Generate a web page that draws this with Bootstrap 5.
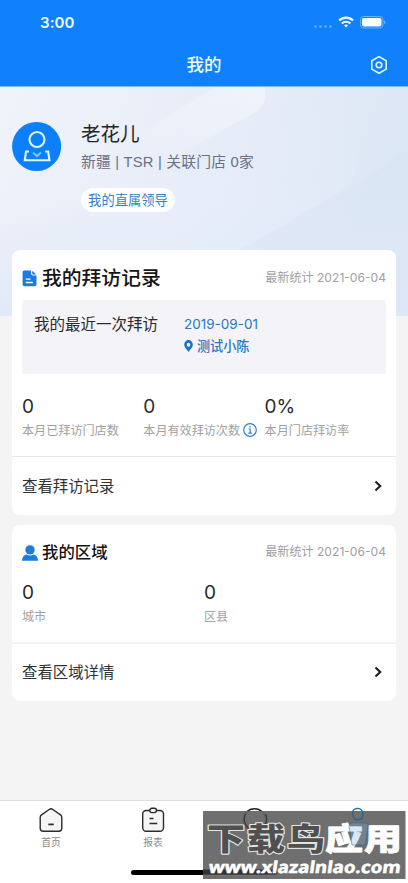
<!DOCTYPE html>
<html lang="zh-CN">
<head>
<meta charset="utf-8">
<meta name="viewport" content="width=device-width, initial-scale=1">
<title>我的</title>
<link href="https://cdn.jsdelivr.net/npm/bootstrap@5.3.0/dist/css/bootstrap.min.css" rel="stylesheet">
<style>
body{font-family:Inter,"Noto Sans CJK SC",sans-serif;background:#f4f4f4;color:#2b2b2d;height:883px;overflow:hidden}
svg{display:block;flex:none}
.app{width:408px;height:883px}
.topbar{height:87px;background:#1080fd;color:#edfdff;border-bottom:1px solid #6fc1ff}
.status{height:44px;padding:2px 22px 0 40px}
.clock{font-size:15px;font-weight:600;letter-spacing:.1px}
.titlebar{height:42px}
.page-title{font-size:17.5px;font-weight:500;line-height:42px}
.gear{right:20px;top:11px}
.hero{height:229px;background:#e5ecf8}
.hero-art{left:0;top:0}
.profile{padding:33px 12px 0;gap:20px}
.avatar{margin-top:2px}
.user-name{font-size:19.5px;line-height:28px;color:#252629}
.user-meta{font-size:14.8px;line-height:22px;margin-top:3px;color:#6d6f86;white-space:nowrap;font-family:"Liberation Sans","Noto Sans CJK SC",sans-serif;letter-spacing:.18px}
.leader{font-size:13.3px;line-height:24px;height:24px;width:94px;margin-top:15px;color:#347fc3;background:#fff}
.cards{margin-top:-66px;padding:0 12px;gap:10px}
.panel{border-radius:8px;background:#fff}
.panel-a{height:265px}
.panel-b{height:176px}
.px{padding-left:10px;padding-right:10px}
.head-a{height:50px;padding-top:7px}
.head-b{height:54px;padding-top:1px}
.t-a{font-size:19.8px;font-weight:500;color:#151515;margin-left:5px}
.t-b{font-size:16.4px;font-weight:500;color:#151515;margin-left:4px}
.stamp{font-size:12.1px;color:#a0a0a2;white-space:nowrap}
.recent{height:74px;margin:0 10px;background:#f3f3f8;border-radius:3px;padding:13px 12px 0}
.recent-label{width:150px;font-size:15.5px;line-height:24px}
.recent-info{font-size:13.1px;line-height:22px;color:#2878c2}
.visit-date{font-size:13.5px}
.stats-a{height:82px;padding-top:20px}
.stats-b{height:63px;padding-top:1px}
.third{width:121.3px}
.half{width:182px}
.num{font-size:19px;line-height:26px;font-weight:400}
.cap{font-size:12.1px;line-height:20px;color:#a1a1a3;white-space:nowrap;margin-top:1px}
.info-dot{margin:-2px 0 0 3px}
.link-row{font-size:15.4px;color:#333;padding-right:14px}
.link-row svg{margin-top:-1px}
.link-a{height:59px;border-top:1px solid #e6e6e6;padding-top:1px}
.link-b{height:59px;border-top:2px solid #f2f2f2}
.tabs{height:83px;background:#fff;border-top:1px solid #dedede}
.tab{width:102px;padding-top:6px;font-size:9.8px;line-height:16px;color:#8b8b8b}
.tab svg{margin-bottom:2px}
.home-bar{left:131px;top:869.5px;width:146px;height:5px;background:#000;border-radius:3px}
.brand{left:202.5px;top:811px}
</style>
<script src="https://cdn.jsdelivr.net/npm/bootstrap@5.3.0/dist/js/bootstrap.bundle.min.js"></script>
</head>
<body>
<div class="app d-flex flex-column position-relative overflow-hidden">
  <header class="topbar flex-shrink-0">
    <div class="status d-flex align-items-center justify-content-between">
      <span class="clock">3:00</span>
      <svg width="74" height="16" viewBox="0 0 74 16">
        <g fill="#68b3ff"><circle cx="3.500" cy="11.500" r="1.300"/><circle cx="8.500" cy="11.500" r="1.300"/><circle cx="13.500" cy="11.500" r="1.300"/><circle cx="18.500" cy="11.500" r="1.300"/></g>
        <g transform="translate(1.500 -.4)" fill="none" stroke="#f4ffff" stroke-width="2.200"><path d="M25.600 5.900a10 10 0 0 1 14 0"/><path d="M28.300 8.900a6.200 6.200 0 0 1 8.600 0"/><path d="M30.500 10.700L32.600 13l2.100-2.300a3.200 3.200 0 0 0-4.200 0z" fill="#f4ffff" stroke="none"/></g>
        <g transform="translate(1 0)"><rect x="47.500" y="1.500" width="22.500" height="11.500" rx="3.200" fill="none" stroke="#68b3ff"/>
        <rect x="49" y="3" width="19.500" height="8.500" rx="1.800" fill="#f4ffff"/>
        <path d="M71 5.200q1.400.4 1.400 2t-1.400 2z" fill="#68b3ff"/></g>
      </svg>
    </div>
    <div class="titlebar position-relative text-center">
      <div class="page-title">我的</div>
      <svg class="gear position-absolute" width="18" height="20" viewBox="0 0 18 20" fill="none" stroke="#dcfbff" stroke-width="1.600" stroke-linejoin="round"><path d="M9 1.600l7.200 4.100v8.400L9 18.300l-7.200-4.200V5.700z"/><circle cx="9" cy="10" r="2.800"/></svg>
    </div>
  </header>

  <section class="hero position-relative flex-shrink-0">
    <svg class="hero-art position-absolute" width="408" height="229" viewBox="0 0 408 229">
      <defs>
        <linearGradient id="sky" x1="0" y1="0" x2="1" y2=".25"><stop offset="0" stop-color="#eff3fa"/><stop offset=".55" stop-color="#e7edf8"/><stop offset="1" stop-color="#dce7f5"/></linearGradient>
        <linearGradient id="beam" x1="0" y1="1" x2="1" y2="0"><stop offset="0" stop-color="#edf2fa" stop-opacity="0"/><stop offset="1" stop-color="#f1f6fc"/></linearGradient>
        <linearGradient id="band" x1="0" y1="1" x2="1" y2="0"><stop offset="0" stop-color="#ebf1fb"/><stop offset="1" stop-color="#e3ebf8" stop-opacity=".2"/></linearGradient>
        <linearGradient id="low" x1="0" y1="0" x2="0" y2="1"><stop offset="0" stop-color="#e0e9f8" stop-opacity="0"/><stop offset="1" stop-color="#dfe8f8" stop-opacity=".8"/></linearGradient>
      </defs>
      <path d="M0 0h408v229H0z" fill="url(#sky)"/>
      <path d="M110 66L215 0h50v10q0 8-9 15L165 75z" fill="url(#beam)" opacity=".85"/>
      <path d="M110 133L245 60 320 18q60-15 30 80L240 163H80z" fill="url(#band)" opacity=".7"/>
      <path d="M240 163L350 101l58-38v100z" fill="#d9e5f5" opacity=".45"/>
      <path d="M0 110h408v119H0z" fill="url(#low)"/>
    </svg>
    <div class="profile position-relative d-flex">
      <svg class="avatar" width="49" height="50" viewBox="0 0 49 50"><circle cx="24.600" cy="24.500" r="24.500" fill="#0b80fa"/><g fill="none" stroke="#dffaff" stroke-width="2.100"><circle cx="25" cy="17.500" r="7.500"/><path d="M17 29.500h-3L12.800 38.200h24.600L36.200 29.500h-3"/><path d="M21 30.500l4 3.600 4-3.600" stroke="#78c3ff"/></g></svg>
      <div>
        <div class="user-name">老花儿</div>
        <div class="user-meta">新疆 | TSR | 关联门店 0家</div>
        <div class="leader rounded-pill text-center">我的直属领导</div>
      </div>
    </div>
  </section>

  <main class="cards position-relative d-flex flex-column flex-grow-1">
    <section class="panel panel-a">
      <div class="head-a px d-flex align-items-center">
        <svg width="15" height="17" viewBox="0 0 15 17"><path d="M2.300.500H9v3q0 2 2 2h3.500v9q0 1.800-1.800 1.800H2.300Q.600 16.300.600 14.500V2.300Q.600.500 2.300.500z" fill="#1b7be0"/><path d="M10.200.800l4 3.800H11q-.8 0-.8-.8z" fill="#1b7be0"/><path d="M3.800 9.100h4.700M3.800 12.500h7" stroke="#fff" stroke-width="1.300"/></svg>
        <span class="t-a">我的拜访记录</span><span class="stamp ms-auto">最新统计 2021-06-04</span>
      </div>
      <div class="recent d-flex">
        <div class="recent-label">我的最近一次拜访</div>
        <div class="recent-info">
          <div class="visit-date">2019-09-01</div>
          <div class="d-flex align-items-center gap-1"><svg width="9" height="12" viewBox="0 0 10 12" preserveAspectRatio="none"><path d="M5 0A4.800 4.800 0 0 0 .2 4.800C.2 7.400 3.400 9.800 5 12 6.600 9.800 9.800 7.400 9.800 4.800A4.800 4.800 0 0 0 5 0zm0 2.700a2 2 0 1 1 0 4 2 2 0 0 1 0-4z" fill="#1c6fc4" fill-rule="evenodd"/></svg><span class="fw-medium">测试小陈</span></div>
        </div>
      </div>
      <div class="stats-a px d-flex">
        <div class="third"><div class="num">0</div><div class="cap">本月已拜访门店数</div></div>
        <div class="third"><div class="num">0</div><div class="cap d-flex align-items-center">本月有效拜访次数<svg class="info-dot" width="14" height="14" viewBox="0 0 14 14" fill="none" stroke="#337fc8" stroke-width="1.200"><circle cx="7" cy="7" r="6.300"/><path d="M5.600 6h1.600v4.200M5.300 10.200h3.600M6.400 3.800h1.300"/></svg></div></div>
        <div class="third"><div class="num">0%</div><div class="cap">本月门店拜访率</div></div>
      </div>
      <div class="link-row link-a px d-flex align-items-center justify-content-between"><span>查看拜访记录</span><svg width="8" height="12" viewBox="0 0 8 12" fill="none" stroke="#222" stroke-width="2.200"><path d="M1.500 1.500L6.200 6l-4.700 4.500"/></svg></div>
    </section>

    <section class="panel panel-b">
      <div class="head-b px d-flex align-items-center">
        <svg width="16" height="16" viewBox="0 0 16 16" fill="#1b7ddd"><circle cx="8" cy="4.900" r="4.700"/><path d="M0 15.700q.3-5.200 4.300-6.200 3.700 2.100 7.400 0 4 1 4.300 6.200z"/></svg>
        <span class="t-b">我的区域</span><span class="stamp ms-auto">最新统计 2021-06-04</span>
      </div>
      <div class="stats-b px d-flex">
        <div class="half"><div class="num">0</div><div class="cap">城市</div></div>
        <div class="half"><div class="num">0</div><div class="cap">区县</div></div>
      </div>
      <div class="link-row link-b px d-flex align-items-center justify-content-between"><span>查看区域详情</span><svg width="8" height="12" viewBox="0 0 8 12" fill="none" stroke="#222" stroke-width="2.200"><path d="M1.500 1.500L6.200 6l-4.700 4.500"/></svg></div>
    </section>
  </main>

  <nav class="tabs d-flex flex-shrink-0">
    <div class="tab d-flex flex-column align-items-center"><svg width="26" height="26" viewBox="0 0 26 26" fill="#f5f5f5" stroke="#2c2c2c" stroke-width="1.400" stroke-linejoin="round"><path d="M11.500 2.300q1.500-1 3 0l8 5.600q1.300.9 1.300 2.500v10.800q0 3-3 3H5.200q-3 0-3-3V10.400q0-1.600 1.300-2.500z"/><path d="M10.300 17.400h5.500" stroke-width="1.700"/></svg>首页</div>
    <div class="tab d-flex flex-column align-items-center"><svg width="26" height="26" viewBox="0 0 26 26" fill="#f5f5f5" stroke="#2c2c2c" stroke-width="1.400"><rect x="2.700" y="3.500" width="20.800" height="20.700" rx="3.500"/><rect x="9.800" y="1.300" width="6.600" height="4.300" rx="2"/><path d="M9.500 11.500h4M9.500 16.600h7.800" stroke-width="1.500"/></svg>报表</div>
    <div class="tab d-flex flex-column align-items-center"><svg width="26" height="26" viewBox="0 0 26 26" fill="none" stroke="#222" stroke-width="1.400"><circle cx="12.500" cy="13" r="11.200"/></svg></div>
    <div class="tab d-flex flex-column align-items-center"><svg width="26" height="30" viewBox="0 0 26 30" fill="none" stroke="#1e73b5" stroke-width="1.400"><rect x="8.500" y="1.500" width="10" height="10.500" rx="4.500"/></svg></div>
  </nav>
  <div class="home-bar position-absolute"></div>

  <svg class="brand position-absolute" width="203" height="69" viewBox="0 0 203 69">
    <path d="M0 0h202.500v68H0z" fill="#646464" fill-opacity=".93"/>
    <path d="M0 58.500h72q2.500 0 2.500 2.500t-2.500 2.500H0z" fill="#333"/>
    <!-- faint outlines of the tab icons under the banner -->
    <path d="M42.500 3a11.200 11.200 0 1 0 20 0" fill="none" stroke="#353535" stroke-width="1.200"/>
    <path d="M150 0v4q0 5 5 5t5-5V0" fill="none" stroke="#23679b" stroke-width="1.200"/>
    <g font-family="'Noto Sans CJK SC',sans-serif" font-weight="900" font-size="38" stroke-linejoin="round" paint-order="stroke">
      <text transform="translate(4 39) scale(1 .81)" textLength="118" fill="#505050" stroke="#e4e4e4" stroke-width="2.600">下载鸟</text>
      <text transform="translate(122 39) scale(1 .81)" textLength="77" fill="#fff" stroke="#fff" stroke-width="1">应用</text>
    </g>
    <path d="M149 34l-3-19q0-3 3-3h13q3 0 3 3l-3 19z" fill="#78b4e4" fill-opacity=".3" stroke="#23679b" stroke-opacity=".5"/>
    <text transform="translate(5 62) skewX(-8)" textLength="192" lengthAdjust="spacingAndGlyphs" font-family="'Noto Sans',sans-serif" font-weight="700" font-size="16.500" fill="#fff" stroke="#fff" stroke-width=".5">www.xlazalnlao.com</text>
  </svg>
</div>
</body>
</html>
